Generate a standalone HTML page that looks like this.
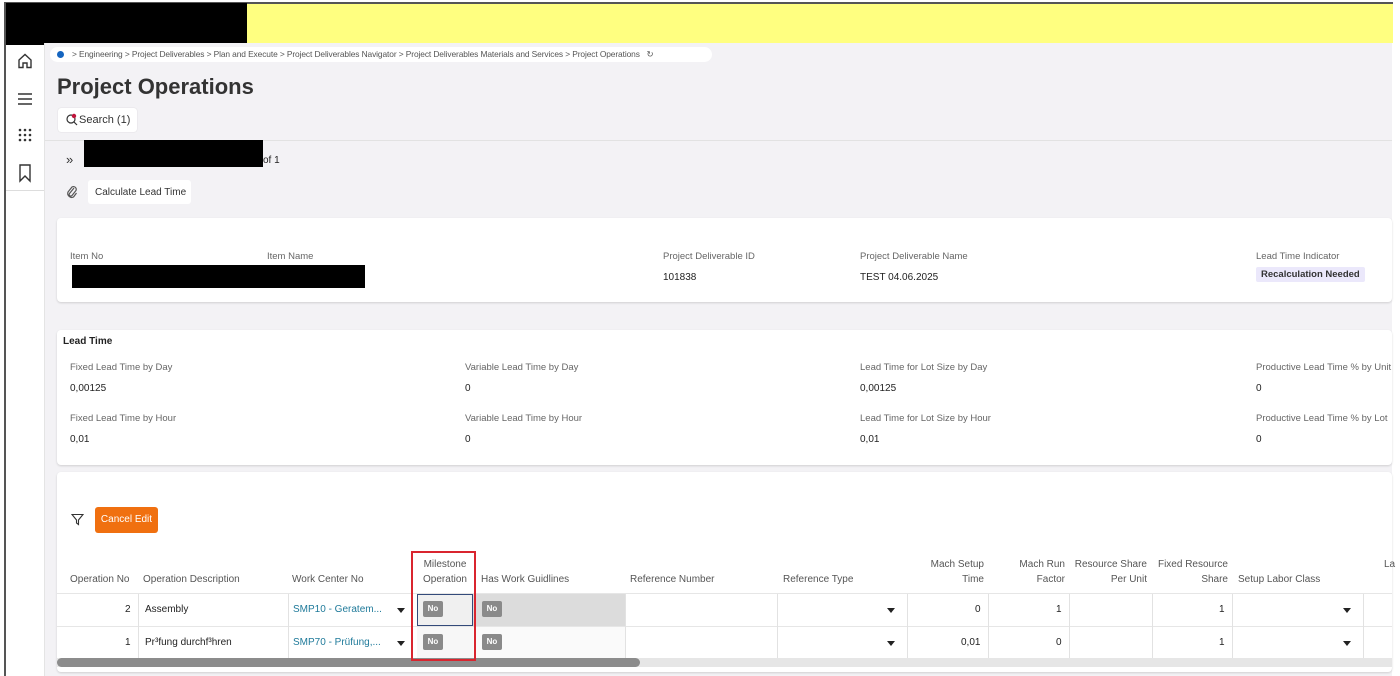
<!DOCTYPE html><html><head><style>
*{margin:0;padding:0;box-sizing:border-box}
body{width:1400px;height:676px;overflow:hidden;background:#fff;font-family:"Liberation Sans",sans-serif;color:#222;position:relative;font-size:10px}
.a{position:absolute;white-space:nowrap}
.lbl{color:#666;font-size:9.5px}
.val{color:#222;font-size:10px}
.card{position:absolute;background:#fff;border-radius:4px;box-shadow:0 1px 2px rgba(0,0,0,.15)}
.th{position:absolute;font-size:10px;color:#555;line-height:15px}
.no{display:inline-block;background:#8a8a8a;color:#fff;font-size:8px;font-weight:bold;width:20px;height:16px;line-height:16px;text-align:center;border-radius:2px;vertical-align:middle}
.dd{position:absolute;width:0;height:0;border-left:4px solid transparent;border-right:4px solid transparent;border-top:5px solid #222}
</style></head><body>
<div class="a" style="left:4px;top:2px;width:1389px;height:2px;background:#555"></div>
<div class="a" style="left:4px;top:4px;width:1389px;height:39px;background:#ffff80"></div>
<div class="a" style="left:4px;top:3px;width:243px;height:42px;background:#000"></div>
<div class="a" style="left:4px;top:3px;width:2px;height:673px;background:#555"></div>
<div class="a" style="left:45px;top:43px;width:1347px;height:633px;background:#f3f2f5"></div>
<div class="a" style="left:6px;top:190px;width:38px;height:1px;background:#ddd"></div>
<div class="a" style="left:44px;top:43px;width:1px;height:633px;background:#e4e4e4"></div>
<svg class="a" style="left:16px;top:52px" width="18" height="18" viewBox="0 0 18 18" fill="none" stroke="#333" stroke-width="1.4"><path d="M3 8 L9 2.5 L15 8 V15.5 H11 V11 H7 V15.5 H3 Z"/></svg>
<svg class="a" style="left:16px;top:90px" width="18" height="18" viewBox="0 0 18 18" stroke="#333" stroke-width="1.4"><path d="M2 4H16M2 9H16M2 14H16"/></svg>
<svg class="a" style="left:18px;top:128px" width="14" height="14" viewBox="0 0 14 14" fill="#333"><circle cx="2" cy="2" r="1.3"/><circle cx="7" cy="2" r="1.3"/><circle cx="12" cy="2" r="1.3"/><circle cx="2" cy="7" r="1.3"/><circle cx="7" cy="7" r="1.3"/><circle cx="12" cy="7" r="1.3"/><circle cx="2" cy="12" r="1.3"/><circle cx="7" cy="12" r="1.3"/><circle cx="12" cy="12" r="1.3"/></svg>
<svg class="a" style="left:17px;top:163px" width="16" height="20" viewBox="0 0 16 20" fill="none" stroke="#333" stroke-width="1.4"><path d="M3 2H13V18L8 13L3 18Z"/></svg>
<div class="a" style="left:50px;top:47px;width:662px;height:15px;background:#fff;border-radius:8px"></div>
<div class="a" style="left:57px;top:51px;width:7px;height:7px;border-radius:50%;background:#1565c0"></div>
<div class="a" style="left:72px;top:49px;font-size:8.4px;color:#555;letter-spacing:-0.1px">&gt; Engineering &gt; Project Deliverables &gt; Plan and Execute &gt; Project Deliverables Navigator &gt; Project Deliverables Materials and Services &gt; Project Operations &nbsp;&nbsp;↻</div>
<div class="a" style="left:57px;top:74px;font-size:22px;font-weight:bold;color:#333">Project Operations</div>
<div class="a" style="left:58px;top:108px;width:79px;height:24px;background:#fff;border-radius:3px;box-shadow:0 0 1px rgba(0,0,0,.2)"></div>
<svg class="a" style="left:65px;top:113px" width="14" height="14" viewBox="0 0 14 14" fill="none" stroke="#333" stroke-width="1.2"><circle cx="6" cy="6" r="4"/><path d="M9 9L12 12"/><circle cx="9" cy="3" r="2.2" fill="#c0143c" stroke="none"/></svg>
<div class="a" style="left:79px;top:114px;font-size:11px;color:#333">Search (1)</div>
<div class="a" style="left:45px;top:140px;width:1347px;height:1px;background:#e2e2e2"></div>
<div class="a" style="left:66px;top:152px;font-size:13px;color:#333">»</div>
<div class="a" style="left:84px;top:140px;width:179px;height:27px;background:#000"></div>
<div class="a" style="left:263px;top:155px;font-size:10px">of 1</div>
<svg class="a" style="left:66px;top:185px" width="12" height="14" viewBox="0 0 12 14" fill="none" stroke="#555" stroke-width="1.2"><path d="M8 3L3.5 8.5A1.6 1.6 0 0 0 6 10.5L10 5.5A2.8 2.8 0 0 0 6 2L2 7A4 4 0 0 0 7.5 12L10.5 8"/></svg>
<div class="a" style="left:88px;top:180px;width:103px;height:24px;background:#fff;border-radius:3px"></div>
<div class="a" style="left:95px;top:187px;font-size:10px;color:#333">Calculate Lead Time</div>
<div class="card" style="left:57px;top:218px;width:1335px;height:84px"></div>
<div class="a lbl" style="left:70px;top:251px">Item No</div>
<div class="a lbl" style="left:267px;top:251px">Item Name</div>
<div class="a" style="left:72px;top:265px;width:293px;height:23px;background:#000"></div>
<div class="a lbl" style="left:663px;top:251px">Project Deliverable ID</div>
<div class="a val" style="left:663px;top:272px">101838</div>
<div class="a lbl" style="left:860px;top:251px">Project Deliverable Name</div>
<div class="a val" style="left:860px;top:272px">TEST 04.06.2025</div>
<div class="a lbl" style="left:1256px;top:251px">Lead Time Indicator</div>
<div class="a" style="left:1256px;top:267px;background:#ebe8fb;padding:2px 5px;font-size:9.5px;font-weight:bold;color:#333;border-radius:2px">Recalculation Needed</div>
<div class="card" style="left:57px;top:330px;width:1335px;height:135px"></div>
<div class="a" style="left:63px;top:336px;font-size:10px;font-weight:bold;color:#222">Lead Time</div>
<div class="a lbl" style="left:70px;top:362px">Fixed Lead Time by Day</div><div class="a val" style="left:70px;top:383px">0,00125</div>
<div class="a lbl" style="left:70px;top:413px">Fixed Lead Time by Hour</div><div class="a val" style="left:70px;top:434px">0,01</div>
<div class="a lbl" style="left:465px;top:362px">Variable Lead Time by Day</div><div class="a val" style="left:465px;top:383px">0</div>
<div class="a lbl" style="left:465px;top:413px">Variable Lead Time by Hour</div><div class="a val" style="left:465px;top:434px">0</div>
<div class="a lbl" style="left:860px;top:362px">Lead Time for Lot Size by Day</div><div class="a val" style="left:860px;top:383px">0,00125</div>
<div class="a lbl" style="left:860px;top:413px">Lead Time for Lot Size by Hour</div><div class="a val" style="left:860px;top:434px">0,01</div>
<div class="a lbl" style="left:1256px;top:362px">Productive Lead Time % by Unit</div><div class="a val" style="left:1256px;top:383px">0</div>
<div class="a lbl" style="left:1256px;top:413px">Productive Lead Time % by Lot</div><div class="a val" style="left:1256px;top:434px">0</div>
<div class="card" style="left:57px;top:472px;width:1335px;height:200px"></div>
<svg class="a" style="left:71px;top:513px" width="13" height="13" viewBox="0 0 13 13" fill="none" stroke="#333" stroke-width="1.1"><path d="M1 1.5H12L7.5 7V11.5L5.5 10V7Z"/></svg>
<div class="a" style="left:95px;top:507px;width:63px;height:26px;background:#f07010;border-radius:3px;color:#fff;font-size:10px;line-height:26px;text-align:center">Cancel Edit</div>
<div class="th" style="left:70px;top:572px">Operation No</div>
<div class="th" style="left:143px;top:572px">Operation Description</div>
<div class="th" style="left:292px;top:572px">Work Center No</div>
<div class="th" style="left:418px;top:557px;text-align:center;width:54px">Milestone<br>Operation</div>
<div class="th" style="left:481px;top:572px">Has Work Guidlines</div>
<div class="th" style="left:630px;top:572px">Reference Number</div>
<div class="th" style="left:783px;top:572px">Reference Type</div>
<div class="th" style="left:900px;top:557px;width:84px;text-align:right">Mach Setup<br>Time</div>
<div class="th" style="left:990px;top:557px;width:75px;text-align:right">Mach Run<br>Factor</div>
<div class="th" style="left:1070px;top:557px;width:77px;text-align:right">Resource Share<br>Per Unit</div>
<div class="th" style="left:1150px;top:557px;width:78px;text-align:right">Fixed Resource<br>Share</div>
<div class="th" style="left:1238px;top:572px">Setup Labor Class</div>
<div class="th" style="left:1384px;top:557px">La</div>
<div class="a" style="left:57px;top:593px;width:1335px;height:1px;background:#e6e6e6"></div>
<div class="a" style="left:57px;top:626px;width:1335px;height:1px;background:#e6e6e6"></div>
<div class="a" style="left:473px;top:594px;width:152px;height:32px;background:#dcdcdc"></div>
<div class="a" style="left:417px;top:594px;width:56px;height:32px;background:#f0f0f0;border:1px solid #334a7a"></div>
<div class="a" style="left:417px;top:627px;width:56px;height:31px;background:#f7f7f7"></div>
<div class="a" style="left:473px;top:627px;width:152px;height:31px;background:#fafafa"></div>
<div class="a" style="left:138px;top:594px;width:1px;height:64px;background:#e2e2e2"></div>
<div class="a" style="left:288px;top:594px;width:1px;height:64px;background:#e2e2e2"></div>
<div class="a" style="left:625px;top:594px;width:1px;height:64px;background:#e2e2e2"></div>
<div class="a" style="left:777px;top:594px;width:1px;height:64px;background:#e2e2e2"></div>
<div class="a" style="left:907px;top:594px;width:1px;height:64px;background:#e2e2e2"></div>
<div class="a" style="left:988px;top:594px;width:1px;height:64px;background:#e2e2e2"></div>
<div class="a" style="left:1069px;top:594px;width:1px;height:64px;background:#e2e2e2"></div>
<div class="a" style="left:1152px;top:594px;width:1px;height:64px;background:#e2e2e2"></div>
<div class="a" style="left:1232px;top:594px;width:1px;height:64px;background:#e2e2e2"></div>
<div class="a" style="left:1363px;top:594px;width:1px;height:64px;background:#e2e2e2"></div>
<div class="a val" style="left:125px;top:604px">2</div>
<div class="a val" style="left:145px;top:604px">Assembly</div>
<div class="a" style="left:293px;top:604px;color:#1f7a9a">SMP10 - Geratem...</div>
<div class="dd" style="left:397px;top:608px"></div>
<div class="a" style="left:423px;top:601px"><span class="no">No</span></div>
<div class="a" style="left:482px;top:601px"><span class="no">No</span></div>
<div class="dd" style="left:887px;top:608px"></div>
<div class="a val" style="left:975px;top:604px">0</div>
<div class="a val" style="left:1056px;top:604px">1</div>
<div class="a val" style="left:1219px;top:604px">1</div>
<div class="dd" style="left:1343px;top:608px"></div>
<div class="a val" style="left:125px;top:637px">1</div>
<div class="a val" style="left:145px;top:637px">Pr³fung durchf³hren</div>
<div class="a" style="left:293px;top:637px;color:#1f7a9a">SMP70 - Prüfung,...</div>
<div class="dd" style="left:397px;top:641px"></div>
<div class="a" style="left:423px;top:634px"><span class="no">No</span></div>
<div class="a" style="left:482px;top:634px"><span class="no">No</span></div>
<div class="dd" style="left:887px;top:641px"></div>
<div class="a val" style="left:961px;top:637px">0,01</div>
<div class="a val" style="left:1056px;top:637px">0</div>
<div class="a val" style="left:1219px;top:637px">1</div>
<div class="dd" style="left:1343px;top:641px"></div>
<div class="a" style="left:57px;top:658px;width:1335px;height:9px;background:#e6e6e6"></div>
<div class="a" style="left:57px;top:658px;width:583px;height:9px;background:#8c8c8c;border-radius:5px"></div>
<div class="a" style="left:411px;top:551px;width:65px;height:110px;border:2px solid #d9252f"></div>
</body></html>
